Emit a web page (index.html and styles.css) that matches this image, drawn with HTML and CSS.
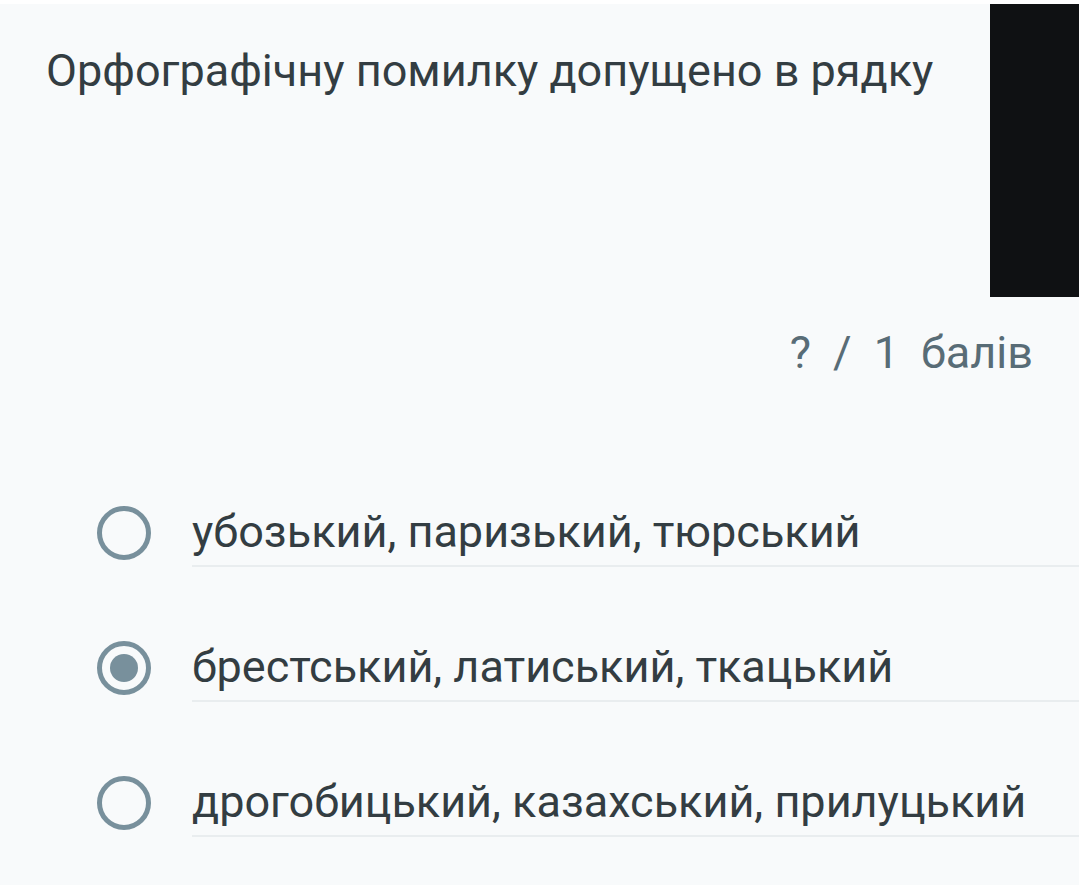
FILE: index.html
```html
<!DOCTYPE html>
<html lang="uk">
<head>
<meta charset="utf-8">
<link rel="stylesheet" href="styles.css">
</head>
<body>
<div class="page">
  <div class="blackout"></div>
  <h1 class="title">Орфографічну помилку допущено в рядку</h1>
  <div class="score"><span>?</span><span>/</span><span>1</span><span>балів</span></div>
  <div class="options">
    <div class="option">
      <span class="radio"></span>
      <span class="label">убозький, паризький, тюрський</span>
    </div>
    <div class="option">
      <span class="radio checked"></span>
      <span class="label">брестський, латиський, ткацький</span>
    </div>
    <div class="option">
      <span class="radio"></span>
      <span class="label">дрогобицький, казахський, прилуцький</span>
    </div>
  </div>
</div>
</body>
</html>
```
FILE: styles.css
```css
html, body {
  margin: 0;
  padding: 0;
  background: #f8fafb;
}
body {
  font-family: Roboto, "Noto Sans", sans-serif;
  color: #333d42;
}
.page {
  position: relative;
  width: 1079px;
  height: 885px;
  border-top: 4px solid #ffffff;
  box-sizing: border-box;
  overflow: hidden;
}
.blackout {
  position: absolute;
  top: -4px;
  right: 0;
  width: 89px;
  height: 297px;
  background: #0f1113;
}
.title {
  margin: 0;
  padding: 40px 0 0 46px;
  font-size: 45px;
  font-weight: 400;
  line-height: 54px;
  color: #333d42;
}
.score {
  display: flex;
  justify-content: flex-end;
  gap: 22px;
  padding: 228px 46px 0 0;
  font-size: 45px;
  line-height: 54px;
  color: #586c76;
}
.options {
  display: flex;
  flex-direction: column;
  padding: 125px 0 0 97px;
}
.option {
  display: flex;
  align-items: flex-start;
  gap: 41px;
  height: 135px;
}
.radio {
  flex: none;
  width: 54px;
  height: 54px;
  box-sizing: border-box;
  border: 5px solid #78909c;
  border-radius: 50%;
  margin-top: 1px;
  display: flex;
  align-items: center;
  justify-content: center;
}
.radio.checked::after {
  content: "";
  width: 28px;
  height: 28px;
  border-radius: 50%;
  background: #78909c;
}
.label {
  flex: 1;
  font-size: 45px;
  line-height: 54px;
  padding-bottom: 6px;
  border-bottom: 2px solid #e9edef;
  color: #333d42;
}
```
